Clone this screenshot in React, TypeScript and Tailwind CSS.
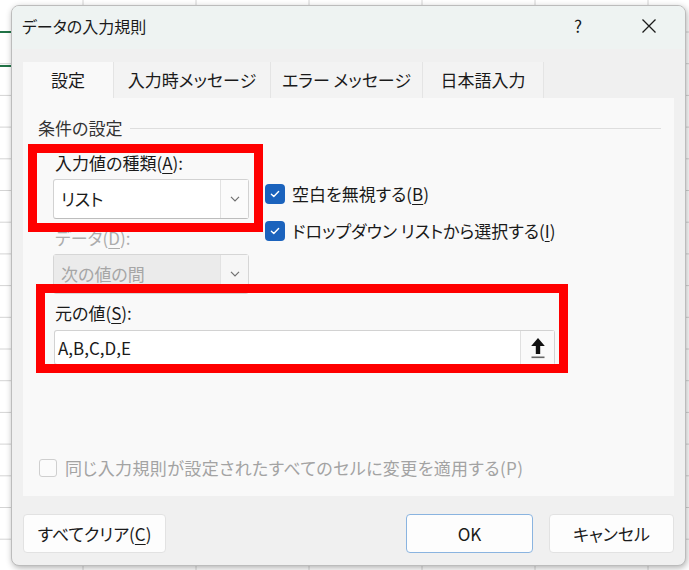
import React from "react";

const jp = "font-['Noto_Sans_CJK_JP',sans-serif] [font-feature-settings:'palt']";

// underlined access key, as in Windows dialogs
function Key({ k }: { k: string }) {
  return <span className="underline underline-offset-[3px] decoration-1">{k}</span>;
}

function SheetGrid() {
  const rows = Array.from({ length: 18 }, (_, i) => 32 + i * 31.7);
  const cols = [83, 196, 309, 422, 535, 648];
  return (
    <svg className="absolute inset-0" width="689" height="570">
      <rect width="689" height="570" fill="#ffffff" />
      {rows.map((y) => (
        <line key={y} x1="0" x2="689" y1={y} y2={y} stroke="#d4d4d4" strokeWidth="1" />
      ))}
      {cols.map((x) => (
        <line key={x} x1={x} x2={x} y1="0" y2="570" stroke="#d4d4d4" strokeWidth="1" />
      ))}
      <line x1="0" x2="20" y1="32" y2="32" stroke="#217346" strokeWidth="2" />
      <line x1="0" x2="20" y1="66" y2="66" stroke="#217346" strokeWidth="2" />
    </svg>
  );
}

function Chevron() {
  return (
    <svg width="10" height="6" viewBox="0 0 10 6">
      <path d="M1 0.8l4 4 4-4" fill="none" stroke="#707070" strokeWidth="1.2" />
    </svg>
  );
}

function CheckBox() {
  return (
    <span className="flex h-[20px] w-[20px] items-center justify-center rounded-[4px] bg-[#1b63bd]">
      <svg width="12" height="12" viewBox="0 0 12 12">
        <path
          d="M2.4 6.3l2.4 2.3 4.8-5"
          fill="none"
          stroke="#ffffff"
          strokeWidth="1.4"
          strokeLinecap="round"
          strokeLinejoin="round"
        />
      </svg>
    </span>
  );
}

function Combo({ value, disabled }: { value: string; disabled?: boolean }) {
  return (
    <div
      className={
        disabled
          ? "flex h-[40px] w-[196px] rounded-[3px] border border-[#d6d6d6]"
          : "flex h-[40px] w-[196px] rounded-[3px] border border-[#d2d2d2] border-b-[#bdbdbd] bg-white"
      }
    >
      <div
        className={
          disabled
            ? "flex flex-1 items-center bg-[#ebebeb] pl-[7px] text-[#a6a6a6]"
            : "flex flex-1 items-center pl-[7px] text-[#1a1a1a]"
        }
      >
        {value}
      </div>
      <div
        className={
          disabled
            ? "flex w-[28px] items-center justify-center border-l border-[#e2e2e2] bg-[#f6f6f6]"
            : "flex w-[28px] items-center justify-center border-l border-[#e2e2e2] bg-[#fbfbfb]"
        }
      >
        <Chevron />
      </div>
    </div>
  );
}

export default function App() {
  return (
    <div className={`relative h-[570px] w-[689px] overflow-hidden ${jp}`}>
      <SheetGrid />

      {/* dialog window */}
      <div className="absolute left-[11px] top-[5px] flex h-[561px] w-[675px] flex-col overflow-hidden rounded-[8px] border border-[#bcbcbc] bg-[#f0f0f0] shadow-[1px_2px_6px_rgba(0,0,0,0.3)]">
        <div className="flex h-[43px] items-center bg-[#eef3f2] pb-[3px] pl-[10px] pr-[13px]">
          <span className="flex-1 text-[16px] text-[#1a1a1a]">データの入力規則</span>
          <span className="flex w-[46px] justify-center text-[17px] text-[#1a1a1a]">?</span>
          <span className="ml-[25px] flex w-[46px] justify-center">
            <svg width="16" height="16" viewBox="0 0 16 16">
              <path d="M1.5 1.5l13 13M14.5 1.5l-13 13" stroke="#1a1a1a" strokeWidth="1.3" />
            </svg>
          </span>
        </div>

        <div className="flex flex-1 flex-col px-[11px]">
          {/* tabs */}
          <div className="mt-[13px] flex h-[36px] text-[17px] text-[#1a1a1a]">
            <div className="flex w-[90px] items-center justify-center bg-[#f9f9f9]">設定</div>
            <div className="flex w-[157px] items-center justify-center border-l border-[#e4e4e4] bg-[#f3f3f3]">
              入力時メッセージ
            </div>
            <div className="flex w-[152px] items-center justify-center border-l border-[#e4e4e4] bg-[#f3f3f3]">
              エラー メッセージ
            </div>
            <div className="flex w-[122px] items-center justify-center border-x border-[#e4e4e4] bg-[#f3f3f3]">
              日本語入力
            </div>
          </div>

          {/* settings panel */}
          <div className="relative flex h-[398px] flex-col bg-[#f9f9f9] text-[17px] text-[#1a1a1a]">
            <div className="mt-[19px] flex h-[22px] items-center pl-[15px] pr-[13px] leading-[22px] text-[#333]">
              <span>条件の設定</span>
              <span className="ml-[8px] h-px flex-1 bg-[#dedede]" />
            </div>

            <div className="mt-[13px] flex flex-col pl-[30px]">
              <div className="flex">
                <div className="flex w-[196px] flex-col">
                  <div className="h-[22px] pl-[2px] leading-[22px]">
                    入力値の種類(<Key k="A" />):
                  </div>
                  <div className="mt-[5px]">
                    <Combo value="リスト" />
                  </div>
                  <div className="mt-[8px] h-[22px] pl-[2px] leading-[22px] text-[#acacac]">
                    データ(<Key k="D" />):
                  </div>
                  <div className="mt-[5px]">
                    <Combo value="次の値の間" disabled />
                  </div>
                </div>
                <div className="ml-[16px] flex flex-col gap-[15px] pt-[31px]">
                  <div className="flex h-[22px] items-center gap-[7px]">
                    <CheckBox />
                    <span>
                      空白を無視する(<Key k="B" />)
                    </span>
                  </div>
                  <div className="flex h-[22px] items-center gap-[7px]">
                    <CheckBox />
                    <span>
                      ドロップダウン リストから選択する(<Key k="I" />)
                    </span>
                  </div>
                </div>
              </div>

              <div className="mt-[8px] h-[22px] pl-[2px] leading-[22px]">
                元の値(<Key k="S" />):
              </div>
              <div className="ml-px mt-[6px] flex h-[35px] w-[501px] rounded-[3px] border border-[#d2d2d2] border-b-[#bdbdbd] bg-white">
                <div className="flex flex-1 items-center pl-[3px]">A,B,C,D,E</div>
                <div className="flex w-[34px] items-center justify-center border-l border-[#e0e0e0] bg-[#fafafa]">
                  <svg width="16" height="24" viewBox="0 0 16 24">
                    <path d="M8 2L1.2 10h4.6v8h4.4v-8h4.6z" fill="#111" />
                    <rect x="1.5" y="20.5" width="13" height="1.6" fill="#666" />
                  </svg>
                </div>
              </div>
            </div>

            <div className="mt-[92px] flex h-[22px] items-center gap-[8px] pl-[16px] text-[#a3a3a3]">
              <span className="h-[18px] w-[18px] rounded-[3px] border border-[#cfcfcf] bg-[#fbfbfb]" />
              <span className="tracking-[0.4px]">
                同じ入力規則が設定されたすべてのセルに変更を適用する(P)
              </span>
            </div>

            {/* red highlight frames */}
            <div className="absolute left-[5px] top-[46px] h-[88px] w-[235px] border-[9px] border-[#ff0000]" />
            <div className="absolute left-[13px] top-[186px] h-[89px] w-[532px] border-[9px] border-[#ff0000]" />
          </div>

          {/* buttons */}
          <div className="mt-[18px] flex h-[39px] text-[17px] text-[#1a1a1a]">
            <div className="flex w-[143px] items-center justify-center rounded-[4px] border border-[#e2e2e2] bg-[#fdfdfd]">
              すべてクリア(<Key k="C" />)
            </div>
            <div className="ml-auto flex w-[127px] items-center justify-center rounded-[4px] border border-[#8ab4e0] bg-[#fdfdfd]">
              OK
            </div>
            <div className="ml-[16px] flex w-[125px] items-center justify-center rounded-[4px] border border-[#e2e2e2] bg-[#fdfdfd]">
              キャンセル
            </div>
          </div>
        </div>
      </div>
    </div>
  );
}
